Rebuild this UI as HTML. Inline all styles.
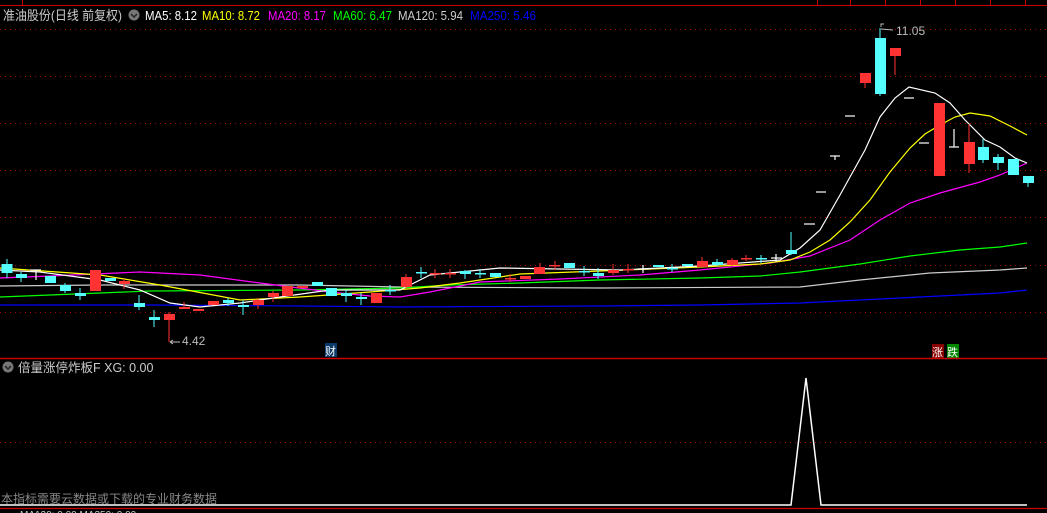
<!DOCTYPE html>
<html><head><meta charset="utf-8"><style>
html,body{margin:0;padding:0;background:#000;width:1047px;height:513px;overflow:hidden}
svg{display:block}
text{font-family:"Liberation Sans","Noto Sans CJK SC",sans-serif}
</style></head><body>
<svg width="1047" height="513" xmlns="http://www.w3.org/2000/svg">
<rect width="1047" height="513" fill="#000"/>
<line x1="0" y1="5.5" x2="1047" y2="5.5" stroke="#c00" stroke-width="1"/>
<g stroke="#c00"><line x1="22.5" y1="0" x2="22.5" y2="5"/><line x1="817.5" y1="0" x2="817.5" y2="5"/><line x1="850.5" y1="0" x2="850.5" y2="5"/><line x1="885.5" y1="0" x2="885.5" y2="5"/><line x1="920.5" y1="0" x2="920.5" y2="5"/><line x1="955.5" y1="0" x2="955.5" y2="5"/><line x1="990.5" y1="0" x2="990.5" y2="5"/><line x1="1025.5" y1="0" x2="1025.5" y2="5"/></g>
<text x="3" y="20" font-size="13" fill="#ccc" textLength="119" lengthAdjust="spacingAndGlyphs">准油股份(日线 前复权)</text>
<circle cx="134" cy="15" r="5.5" fill="#777"/>
<path d="M131 14 L134 17 L137 14" stroke="#222" stroke-width="1.5" fill="none"/>
<g font-size="12.5"><text x="145" y="20" fill="#fff" textLength="52" lengthAdjust="spacingAndGlyphs">MA5: 8.12</text>
<text x="202" y="20" fill="#ff0" textLength="58" lengthAdjust="spacingAndGlyphs">MA10: 8.72</text>
<text x="268" y="20" fill="#f0f" textLength="58" lengthAdjust="spacingAndGlyphs">MA20: 8.17</text>
<text x="333" y="20" fill="#0f0" textLength="59" lengthAdjust="spacingAndGlyphs">MA60: 6.47</text>
<text x="398" y="20" fill="#ccc" textLength="65" lengthAdjust="spacingAndGlyphs">MA120: 5.94</text>
<text x="470" y="20" fill="#00f" textLength="66" lengthAdjust="spacingAndGlyphs">MA250: 5.46</text></g>
<g stroke="#a00" stroke-dasharray="1 4" stroke-width="1">
<line x1="0" y1="29.5" x2="1047" y2="29.5"/><line x1="0" y1="76.5" x2="1047" y2="76.5"/><line x1="0" y1="123.5" x2="1047" y2="123.5"/><line x1="0" y1="170.5" x2="1047" y2="170.5"/><line x1="0" y1="217.5" x2="1047" y2="217.5"/><line x1="0" y1="265.5" x2="1047" y2="265.5"/><line x1="0" y1="312.5" x2="1047" y2="312.5"/><line x1="0" y1="442.5" x2="1047" y2="442.5"/>
</g>
<g fill="none" stroke-width="1.2">
<polyline stroke="#00f" points="0,305 150,305 300,306 400,307 600,306 700,305 800,303 900,298 1000,293 1027,290"/>
<polyline stroke="#ccc" points="0,286 100,285 300,285 400,287 600,288 800,287 860,280 930,273 1000,270 1027,268"/>
<polyline stroke="#0f0" points="0,297 50,295 100,293 150,291 300,290 400,288 450,285 520,283 600,280 700,278 760,276 800,272 860,264 910,256 960,250 1000,247 1027,243"/>
<polyline stroke="#f0f" points="0,278 50,276 140,272 200,275 260,283 330,292 370,296 400,297 430,292 480,282 560,279 640,275 700,270 770,263 810,256 850,240 880,220 910,203 940,193 980,182 1000,175 1027,163"/>
<polyline stroke="#ff0" points="0,268 100,275 160,285 240,300 300,297 370,292 420,288 460,283 520,274 600,271 700,267 760,264 790,260 810,252 830,240 850,222 870,200 890,172 910,148 925,134 940,125 955,117 970,113 990,116 1012,127 1027,135"/>
<polyline stroke="#fff" points="0,270 40,272 100,280 140,290 170,303 200,307 240,303 280,297 330,290 400,290 430,275 500,268 620,270 700,266 780,260 800,248 820,230 840,195 865,150 880,117 895,98 909,87 935,93 950,103 965,120 985,140 1000,147 1015,158 1027,163"/>
</g>
<g fill="#5ff" stroke="#5ff">
<line x1="7" y1="259" x2="7" y2="278"/><rect x="1.5" y="264" width="11" height="9" stroke="none"/>
<line x1="21" y1="272" x2="21" y2="282"/><rect x="16" y="274" width="11" height="4" stroke="none"/>
<rect x="45" y="276" width="11" height="7" stroke="none"/>
<line x1="65" y1="283" x2="65" y2="293"/><rect x="60" y="285" width="11" height="6" stroke="none"/>
<line x1="80" y1="288" x2="80" y2="300"/><rect x="75" y="293" width="11" height="3" stroke="none"/>
<rect x="105" y="278" width="11" height="3" stroke="none"/>
<line x1="139" y1="295" x2="139" y2="310"/><rect x="134" y="303" width="11" height="4" stroke="none"/>
<line x1="154" y1="310" x2="154" y2="327"/><rect x="149" y="317" width="11" height="3" stroke="none"/>
<line x1="228" y1="298" x2="228" y2="306"/><rect x="223" y="300" width="11" height="3" stroke="none"/>
<line x1="243" y1="300" x2="243" y2="315"/><rect x="238" y="305" width="11" height="2" stroke="none"/>
<rect x="312" y="282" width="11" height="4" stroke="none"/>
<rect x="326" y="288" width="11" height="8" stroke="none"/>
<line x1="346" y1="290" x2="346" y2="302"/><rect x="341" y="293" width="11" height="3" stroke="none"/>
<line x1="361" y1="293" x2="361" y2="305"/><rect x="356" y="297" width="11" height="2" stroke="none"/>
<line x1="390" y1="285" x2="390" y2="295"/><rect x="385" y="290" width="11" height="1.5" stroke="none"/>
<line x1="421" y1="267" x2="421" y2="278"/><rect x="416" y="272" width="11" height="1.5" stroke="none"/>
<line x1="465" y1="270" x2="465" y2="279"/><rect x="460" y="271" width="11" height="3" stroke="none"/>
<line x1="480" y1="269" x2="480" y2="278"/><rect x="475" y="273" width="11" height="1.5" stroke="none"/>
<rect x="490" y="273" width="11" height="4" stroke="none"/>
<rect x="564" y="263" width="11" height="5" stroke="none"/>
<line x1="584" y1="266" x2="584" y2="276"/><rect x="579" y="271" width="11" height="1.5" stroke="none"/>
<line x1="598" y1="268" x2="598" y2="279"/><rect x="593" y="273" width="11" height="3" stroke="none"/>
<rect x="653" y="265" width="11" height="2" stroke="none"/>
<line x1="672" y1="264" x2="672" y2="272"/><rect x="667" y="268" width="11" height="1.5" stroke="none"/>
<rect x="682" y="264" width="11" height="2" stroke="none"/>
<line x1="717" y1="259" x2="717" y2="266"/><rect x="712" y="262" width="11" height="3" stroke="none"/>
<line x1="761" y1="255" x2="761" y2="263"/><rect x="756" y="258" width="11" height="1.5" stroke="none"/>
<line x1="791" y1="232" x2="791" y2="255"/><rect x="786" y="250" width="11" height="4" stroke="none"/>
<line x1="880" y1="28" x2="880" y2="96"/><rect x="875" y="38" width="11" height="56" stroke="none"/>
<line x1="983" y1="139" x2="983" y2="163"/><rect x="978" y="147" width="11" height="13" stroke="none"/>
<line x1="998" y1="154" x2="998" y2="170"/><rect x="993" y="157" width="11" height="6" stroke="none"/>
<rect x="1008" y="159" width="11" height="16" stroke="none"/>
<line x1="1028" y1="180" x2="1028" y2="187"/><rect x="1023" y="176" width="11" height="7" stroke="none"/>
</g>
<g fill="#f33" stroke="#f33">
<rect x="90" y="270" width="11" height="21" stroke="none"/>
<line x1="124" y1="279" x2="124" y2="289"/><rect x="119" y="281" width="11" height="3" stroke="none"/>
<line x1="169" y1="312" x2="169" y2="342"/><rect x="164" y="314" width="11" height="6" stroke="none"/>
<line x1="184" y1="302" x2="184" y2="309"/><rect x="179" y="307" width="11" height="2" stroke="none"/>
<rect x="193" y="309" width="11" height="2" stroke="none"/>
<rect x="208" y="301" width="11" height="4" stroke="none"/>
<line x1="258" y1="298" x2="258" y2="309"/><rect x="253" y="300" width="11" height="5" stroke="none"/>
<line x1="273" y1="291" x2="273" y2="302"/><rect x="268" y="293" width="11" height="4" stroke="none"/>
<rect x="282" y="286" width="11" height="10" stroke="none"/>
<rect x="297" y="286" width="11" height="2" stroke="none"/>
<rect x="371" y="293" width="11" height="10" stroke="none"/>
<line x1="406" y1="274" x2="406" y2="288"/><rect x="401" y="277" width="11" height="10" stroke="none"/>
<line x1="435" y1="269" x2="435" y2="278"/><rect x="430" y="273" width="11" height="1.5" stroke="none"/>
<line x1="450" y1="269" x2="450" y2="278"/><rect x="445" y="273" width="11" height="1.5" stroke="none"/>
<line x1="510" y1="274" x2="510" y2="282"/><rect x="505" y="278" width="11" height="1.5" stroke="none"/>
<rect x="520" y="276" width="11" height="3" stroke="none"/>
<line x1="540" y1="263" x2="540" y2="274"/><rect x="534" y="267" width="11" height="7" stroke="none"/>
<line x1="555" y1="261" x2="555" y2="270"/><rect x="549" y="265" width="11" height="1.5" stroke="none"/>
<line x1="613" y1="264" x2="613" y2="275"/><rect x="608" y="270" width="11" height="3" stroke="none"/>
<line x1="628" y1="264" x2="628" y2="273"/><rect x="623" y="269" width="11" height="1.5" stroke="none"/>
<line x1="702" y1="257" x2="702" y2="267"/><rect x="697" y="261" width="11" height="6" stroke="none"/>
<line x1="732" y1="258" x2="732" y2="266"/><rect x="727" y="260" width="11" height="5" stroke="none"/>
<line x1="746" y1="255" x2="746" y2="261"/><rect x="741" y="258" width="11" height="1.5" stroke="none"/>
<line x1="865" y1="73" x2="865" y2="88"/><rect x="860" y="73" width="11" height="10" stroke="none"/>
<line x1="895" y1="48" x2="895" y2="75"/><rect x="890" y="48" width="11" height="8" stroke="none"/>
<rect x="934" y="103" width="11" height="73" stroke="none"/>
<line x1="969" y1="124" x2="969" y2="173"/><rect x="964" y="142" width="11" height="22" stroke="none"/>
</g>
<g stroke="#fff" stroke-width="1.2">
<line x1="30" y1="270" x2="41" y2="270"/><line x1="36" y1="270" x2="36" y2="280"/>
<line x1="638" y1="269" x2="649" y2="269"/><line x1="643" y1="265" x2="643" y2="273"/>
<line x1="771" y1="258" x2="782" y2="258"/><line x1="776" y1="254" x2="776" y2="262"/>
<line x1="804" y1="224" x2="815" y2="224"/>
<line x1="816" y1="192" x2="826" y2="192"/>
<line x1="830" y1="156" x2="840" y2="156"/><line x1="835" y1="156" x2="835" y2="160"/>
<line x1="845" y1="116" x2="855" y2="116"/>
<line x1="904" y1="98" x2="914" y2="98"/>
<line x1="919" y1="143" x2="929" y2="143"/>
<line x1="949" y1="147" x2="959" y2="147"/><line x1="954" y1="129" x2="954" y2="147"/>
</g>
<text x="182" y="345" font-size="12" fill="#bbb">4.42</text>
<path d="M170 342 L180 342 M170 342 L173 340 M170 342 L173 344" stroke="#bbb" fill="none"/>
<text x="896" y="35" font-size="12" fill="#bbb">11.05</text>
<path d="M881 29 L893 30 M881 27 L881 24 L884 24" stroke="#bbb" fill="none"/>
<rect x="325" y="343" width="12" height="14" fill="#0a3a6a"/>
<text x="325" y="355" font-size="11" fill="#fff">财</text>
<rect x="932" y="344" width="12" height="14" fill="#800"/>
<text x="932" y="356" font-size="11" fill="#fff">涨</text>
<rect x="947" y="344" width="12" height="14" fill="#080"/>
<text x="947" y="356" font-size="11" fill="#fff">跌</text>
<line x1="0" y1="358.5" x2="1047" y2="358.5" stroke="#c00" stroke-width="1.5"/>
<circle cx="8" cy="367" r="5.5" fill="#777"/>
<path d="M5 366 L8 369 L11 366" stroke="#222" stroke-width="1.5" fill="none"/>
<text x="18" y="372" font-size="12.5" fill="#ccc">倍量涨停炸板F  XG: 0.00</text>
<polyline points="0,505 791,505 806,378 821,505 1027,505" fill="none" stroke="#fff" stroke-width="1.5"/>
<text x="1" y="503" font-size="12" fill="#888">本指标需要云数据或下载的专业财务数据</text>
<line x1="0" y1="508.5" x2="1047" y2="508.5" stroke="#c00" stroke-width="1.2"/>
<text x="20" y="518" font-size="10" fill="#ccc">MA120: 0.00  MA250: 0.00</text>
</svg>
</body></html>
